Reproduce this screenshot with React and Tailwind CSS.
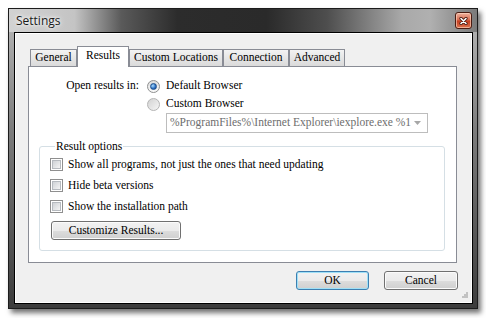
import React from 'react';

const serif = "[font-family:'Liberation_Serif','Times_New_Roman',serif] text-[11.5px] text-black";

function Radio({ checked }) {
  if (checked) {
    return (
      <span className="w-[13px] h-[13px] shrink-0 rounded-full border border-[#8e8f8f] bg-[linear-gradient(to_bottom,#dcdcdc,#fbfbfb)] flex items-center justify-center">
        <span className="w-[7px] h-[7px] rounded-full border border-[#1d4f8b] bg-[radial-gradient(circle_at_35%_35%,#a8dcff,#2a6cc0_60%,#16427e)]" />
      </span>
    );
  }
  return (
    <span className="w-[13px] h-[13px] shrink-0 rounded-full border border-[#b4b4b4] bg-[linear-gradient(135deg,#d2d2d2,#f6f6f6)]" />
  );
}

function Checkbox() {
  return (
    <span className="w-[13px] h-[13px] shrink-0 border border-[#8f8f8f] bg-white p-[1px]">
      <span className="block w-full h-full border border-[#b6babf] bg-[linear-gradient(135deg,#cfd2d6,#f4f4f4)]" />
    </span>
  );
}

function Tab({ label, width, active }) {
  if (active) {
    return (
      <div
        className={`${width} h-[21px] -mb-[1px] relative z-10 bg-white border border-b-0 border-[#898c95] flex items-center justify-center pb-[2px]`}
      >
        {label}
      </div>
    );
  }
  return (
    <div
      className={`${width} h-[17px] bg-[linear-gradient(to_bottom,#f3f3f3,#e6e6e6_50%,#dadada)] border border-b-0 border-[#898c95] flex items-center justify-center`}
    >
      {label}
    </div>
  );
}

function Button({ children, width, isDefault }) {
  return (
    <button
      className={`${width} h-[19px] rounded-[3px] border ${
        isDefault
          ? 'border-[#3c7fb1] shadow-[inset_0_0_0_1px_#9fe0f7]'
          : 'border-[#707070] shadow-[inset_0_0_0_1px_#fbfbfb]'
      } bg-[linear-gradient(to_bottom,#f2f2f2,#ebebeb_50%,#dddddd_51%,#cfcfcf)] flex items-center justify-center leading-none`}
    >
      {children}
    </button>
  );
}

export default function App() {
  return (
    <div className={`w-[486px] h-[318px] bg-white pt-[8px] pl-[8px] ${serif}`}>
      <div className="w-[470px] h-[301px] border border-[#1c1c1c] flex flex-col bg-[linear-gradient(to_bottom,#b9b9b9,#7d7d7d_40%,#3c3c3c)] shadow-[3px_4px_5px_rgba(0,0,0,0.55)]">
        {/* Title bar */}
        <div className="h-[23px] flex items-center justify-between pl-[7px] pr-[5px] bg-[linear-gradient(to_right,#d2d2d2_0%,#c4c4c4_14%,#5a5a5a_24%,#2c2c2c_36%,#2a2a2a_55%,#4e4e4e_68%,#a9a9a9_84%,#b0b0b0_90%,#7a7a7a_100%)]">
          <span className="[font-family:'Open_Sans',sans-serif] text-[12px] text-[#1a1a1a] [text-shadow:0_0_6px_#ffffff,0_0_3px_#ffffff]">
            Settings
          </span>
          <button className="w-[17px] h-[17px] rounded-[3px] border border-[#4a1c12] bg-[linear-gradient(to_bottom,#eeb19d,#d8694c_48%,#c43b1e_52%,#dd7450)] shadow-[inset_0_0_0_1px_rgba(255,220,200,0.6)] flex items-center justify-center">
            <svg width="9" height="8" viewBox="0 0 9 8">
              <path d="M2 1.5 L7 6.5 M7 1.5 L2 6.5" stroke="#4a1a10" strokeWidth="3.2" strokeLinecap="round" />
              <path d="M2 1.5 L7 6.5 M7 1.5 L2 6.5" stroke="#ffffff" strokeWidth="1.6" strokeLinecap="round" />
            </svg>
          </button>
        </div>

        {/* Frame + client */}
        <div className="flex-1 flex pl-[5px] pr-[4px] pb-[4px]">
          <div className="flex-1 border border-black">
            <div className="h-full border border-white bg-[#f0f0f0] flex flex-col">
              {/* Tabs */}
              <div className="pt-[12px] pl-[12px]">
                <div className="h-[20px] flex items-end ml-[2px]">
                  <Tab label="General" width="w-[47px]" />
                  <Tab label="Results" width="w-[52px]" active />
                  <Tab label="Custom Locations" width="w-[94px]" />
                  <Tab label="Connection" width="w-[66px]" />
                  <Tab label="Advanced" width="w-[56px]" />
                </div>

                {/* Tab panel */}
                <div className="w-[429px] h-[197px] bg-white border border-[#898c95] pt-[10px] flex flex-col">
                  <div className="flex">
                    <div className="w-[112px] pr-[2px] h-[18px] flex items-center justify-end">
                      Open results in:
                    </div>
                    <div className="ml-[6px] flex flex-col">
                      <div className="h-[18px] flex items-center gap-[6px]">
                        <Radio checked />
                        <span>Default Browser</span>
                      </div>
                      <div className="h-[18px] flex items-center gap-[6px]">
                        <Radio />
                        <span>Custom Browser</span>
                      </div>
                      <div className="ml-[19px] w-[262px] h-[20px] border border-[#bdbdbd] bg-white flex items-center justify-between pl-[3px] pr-[6px]">
                        <span className="text-[#6d6d6d]">
                          %ProgramFiles%\Internet Explorer\iexplore.exe %1
                        </span>
                        <svg width="7" height="4" viewBox="0 0 7 4">
                          <path d="M0 0 H7 L3.5 4 Z" fill="#a7a7a7" />
                        </svg>
                      </div>
                    </div>
                  </div>

                  <fieldset className="mt-[6px] ml-[10px] mr-[11px] border border-[#d5dfe5] rounded-[3px] pl-[10px] pb-[10px]">
                    <legend className="ml-[5px] px-[1px] leading-[14px]">Result options</legend>
                    <div className="mt-[1px] flex flex-col">
                      <label className="h-[21px] flex items-center gap-[5px]">
                        <Checkbox />
                        <span>Show all programs, not just the ones that need updating</span>
                      </label>
                      <label className="h-[21px] flex items-center gap-[5px]">
                        <Checkbox />
                        <span>Hide beta versions</span>
                      </label>
                      <label className="h-[21px] flex items-center gap-[5px]">
                        <Checkbox />
                        <span>Show the installation path</span>
                      </label>
                    </div>
                    <div className="mt-[4px] ml-[1px]">
                      <Button width="w-[130px]">Customize Results...</Button>
                    </div>
                  </fieldset>
                </div>
              </div>

              {/* Footer buttons */}
              <div className="mt-[8px] flex justify-end gap-[15px] pr-[13px]">
                <Button width="w-[73px]" isDefault>
                  OK
                </Button>
                <Button width="w-[74px]">Cancel</Button>
              </div>

              {/* Size grip */}
              <div className="flex-1 flex items-end justify-end pr-[3px] pb-[3px]">
                <svg width="7" height="7" viewBox="0 0 7 7">
                  <rect x="5" y="0" width="2" height="2" fill="#c2c2c2" />
                  <rect x="3" y="2" width="2" height="2" fill="#c2c2c2" />
                  <rect x="5" y="2" width="2" height="2" fill="#c2c2c2" />
                  <rect x="1" y="4" width="2" height="2" fill="#c2c2c2" />
                  <rect x="3" y="4" width="2" height="2" fill="#c2c2c2" />
                  <rect x="5" y="4" width="2" height="2" fill="#c2c2c2" />
                </svg>
              </div>
            </div>
          </div>
        </div>
      </div>
    </div>
  );
}
